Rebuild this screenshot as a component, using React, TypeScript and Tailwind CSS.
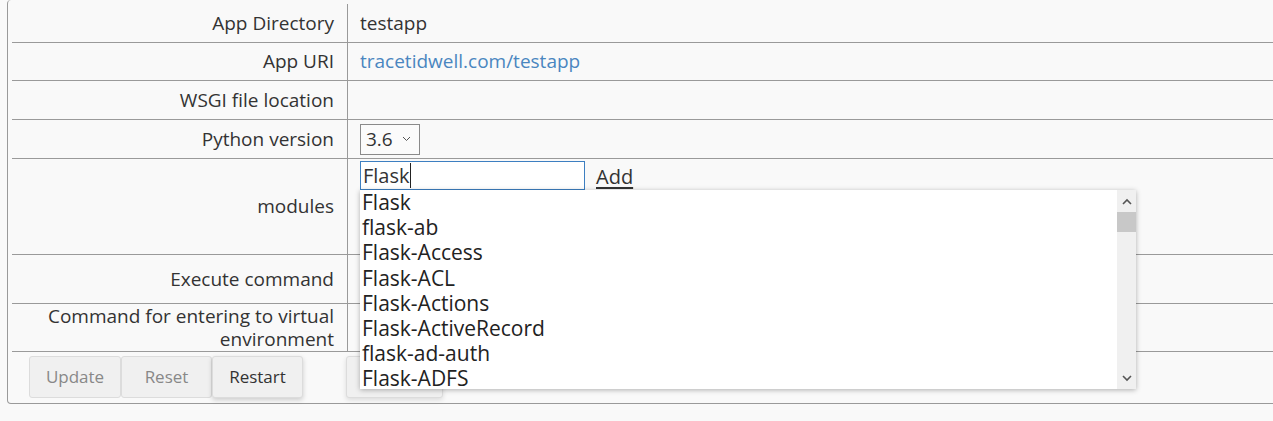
import React from "react";

const rowBorder = "border-b border-[#9a9a9a]";

function Row({ label, h, children, twoLine }: { label: React.ReactNode; h: string; children?: React.ReactNode; twoLine?: boolean }) {
  return (
    <div className={`grid grid-cols-[336px_1fr] ${rowBorder} ${h}`}>
      <div className={`flex items-center justify-end border-r border-[#9a9a9a] pr-[13px] text-right ${twoLine ? "leading-[23px]" : ""}`}>
        {label}
      </div>
      <div className="flex items-center pl-[12px]">{children}</div>
    </div>
  );
}

const items = [
  "Flask",
  "flask-ab",
  "Flask-Access",
  "Flask-ACL",
  "Flask-Actions",
  "Flask-ActiveRecord",
  "flask-ad-auth",
  "Flask-ADFS",
];

export default function App() {
  return (
    <div className="h-[421px] w-[1273px] overflow-hidden bg-[#f9f9f9] font-['Open_Sans',sans-serif] text-[19px] text-[#333]">
      <div className="relative ml-[7px] w-[1290px] rounded-[4px] border border-t-0 border-[#9a9a9a] pl-[4px] pt-[4px]">
        <Row label="App Directory" h="h-[39px]">
          <span>testapp</span>
        </Row>
        <Row label="App URI" h="h-[38px]">
          <span className="text-[#4a86c0]">tracetidwell.com/testapp</span>
        </Row>
        <Row label="WSGI file location" h="h-[39px]" />
        <Row label="Python version" h="h-[39px]">
          <div className="flex h-[31px] w-[60px] items-center border border-[#8a8a8a] bg-[#fbfbfb] pl-[5px]">
            <span>3.6</span>
            <svg className="ml-[9px]" width="9" height="6" viewBox="0 0 9 6">
              <path d="M1 1 L4.5 4.5 L8 1" fill="none" stroke="#555" strokeWidth="1" />
            </svg>
          </div>
        </Row>
        <div className={`grid grid-cols-[336px_1fr] ${rowBorder} h-[96px]`}>
          <div className="flex items-center justify-end border-r border-[#9a9a9a] pr-[13px]">modules</div>
          <div className="flex items-start pl-[12px] pt-[2px]">
            <div className="flex h-[29px] w-[225px] items-center border border-[#3d7fc1] bg-white pl-[2px] text-[20px]">
              <span>Flask</span>
              <span className="h-[25px] w-px bg-[#222]" />
            </div>
            <span className="ml-[11px] mt-[1px] text-[20px] underline underline-offset-[3px]">Add</span>
          </div>
        </div>
        <Row label="Execute command" h="h-[49px]" />
        <Row
          twoLine
          label={
            <span>
              Command for entering to virtual
              <br />
              environment
            </span>
          }
          h="h-[48px]"
        />
        <div className="flex items-start pb-[5px] pl-[17px] pt-[4px] text-[17px]">
          <button className="h-[42px] w-[92px] rounded-[3px] border border-[#dcdcdc] bg-[#f0f0f0] text-[#888]">Update</button>
          <button className="h-[42px] w-[91px] rounded-[3px] border border-[#dcdcdc] bg-[#f0f0f0] text-[#888]">Reset</button>
          <button className="h-[42px] w-[91px] rounded-[3px] border border-[#dcdcdc] bg-[#f0f0f0] text-[#333] shadow-[0_2px_5px_rgba(0,0,0,0.18)]">Restart</button>
          <button className="ml-[43px] h-[42px] w-[97px] rounded-[3px] border border-[#dcdcdc] bg-[#f0f0f0] shadow-[0_2px_5px_rgba(0,0,0,0.12)]" />
        </div>

        <div className="absolute left-[352px] top-[190px] flex h-[199px] w-[776px] bg-white shadow-[0_1px_5px_rgba(0,0,0,0.3)]">
          <div className="flex-1 overflow-hidden pl-[2px] text-[21px] leading-[25.2px] text-[#222]">
            {items.map((it) => (
              <div key={it}>{it}</div>
            ))}
          </div>
          <div className="relative w-[19px] bg-[#f0f0f0]">
            <svg className="absolute left-[5px] top-[8px]" width="10" height="7" viewBox="0 0 10 7">
              <path d="M1 6 L5 2 L9 6" fill="none" stroke="#555" strokeWidth="1.6" />
            </svg>
            <div className="absolute left-0 top-[22px] h-[20px] w-[19px] bg-[#c8c8c8]" />
            <svg className="absolute bottom-[7px] left-[5px]" width="10" height="7" viewBox="0 0 10 7">
              <path d="M1 1 L5 5 L9 1" fill="none" stroke="#555" strokeWidth="1.6" />
            </svg>
          </div>
        </div>
      </div>
    </div>
  );
}
